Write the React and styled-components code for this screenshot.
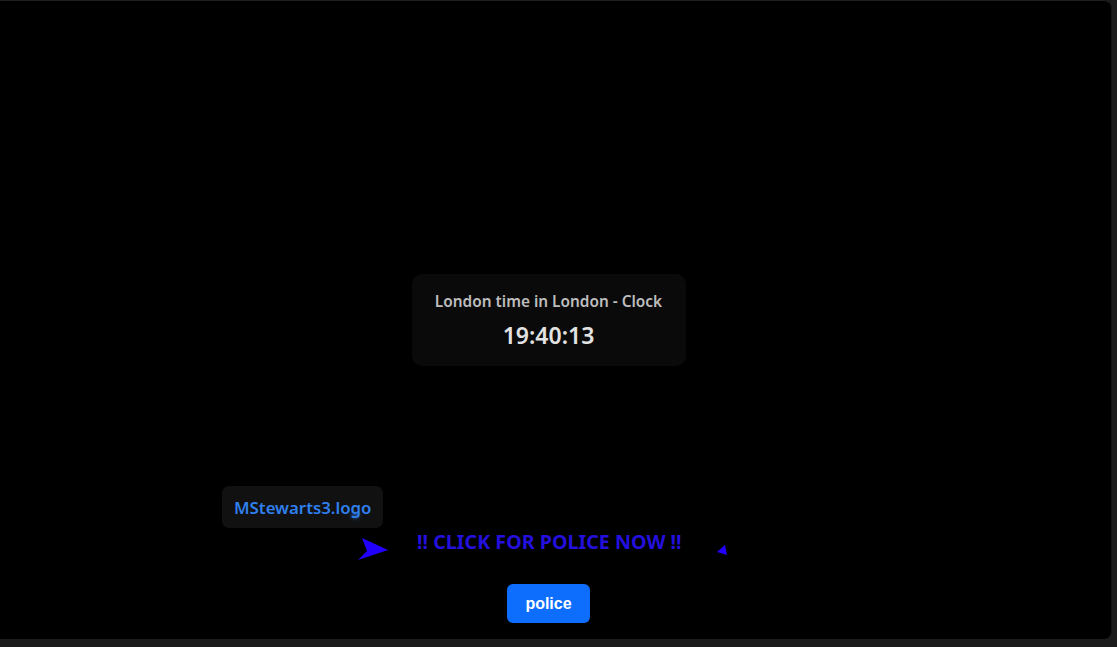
import React from "react";
import styled, { createGlobalStyle } from "styled-components";

const GlobalStyle = createGlobalStyle`
  html, body {
    margin: 0;
    padding: 0;
    background: #1b1b1b;
  }
  body {
    font-family: "Noto Sans", "Open Sans", sans-serif;
    font-variant-ligatures: none;
  }
`;

export default function App() {
  return (
    <>
      <GlobalStyle />
      <Panel>
        <ClockCard>
          <ClockTitle>London time in London - Clock</ClockTitle>
          <ClockTime>19:40:13</ClockTime>
        </ClockCard>

        <LogoRow>
          <LogoCard>
            MStewarts3.logo
            <Glow />
          </LogoCard>
        </LogoRow>

        <CallRow>
          <Dart width="31" height="23" viewBox="0 0 31 23">
            <polygon points="4,0 30,12 0,22 9,13" />
          </Dart>
          <CallText>!! CLICK FOR POLICE NOW !!</CallText>
          <SmallTip width="11" height="11" viewBox="0 0 11 11">
            <polygon points="8,0 0,7 10,10" />
          </SmallTip>
        </CallRow>

        <PoliceButton>police</PoliceButton>
      </Panel>
    </>
  );
}

const Panel = styled.div`
  display: flex;
  flex-direction: column;
  align-items: center;
  box-sizing: border-box;
  width: 1112px;
  height: 639px;
  padding: 273px 14px 0 0;
  background: #000;
  border-top: 1px solid #1e1e1e;
  border-right: 1px solid #111;
  border-radius: 0 8px 8px 0;
`;

const ClockCard = styled.div`
  display: flex;
  flex-direction: column;
  align-items: center;
  box-sizing: border-box;
  width: 274px;
  height: 92px;
  padding-top: 17px;
  gap: 8px;
  background: #0a0a0a;
  border-radius: 10px;
`;

const ClockTitle = styled.div`
  color: #bdbdbd;
  font-size: 15.4px;
  font-weight: 600;
  line-height: 21px;
`;

const ClockTime = styled.div`
  color: #e2e2e2;
  font-size: 23px;
  font-weight: 600;
  line-height: 30px;
`;

const LogoRow = styled.div`
  align-self: stretch;
  display: flex;
  padding-left: 222px;
  margin-top: 120px;
`;

const LogoCard = styled.div`
  position: relative;
  display: flex;
  align-items: center;
  box-sizing: border-box;
  height: 42px;
  padding: 0 12px;
  background: #111;
  border-radius: 7px;
  color: #2f7fee;
  font-size: 16.8px;
  font-weight: 600;
`;

const Glow = styled.span`
  position: absolute;
  left: 129px;
  top: 27px;
  width: 8px;
  height: 5px;
  border-radius: 50%;
  background: #2f7fee;
  filter: blur(2px);
  opacity: 0.7;
`;

const CallRow = styled.div`
  align-self: flex-start;
  display: flex;
  align-items: flex-start;
  margin: 10px 0 0 358px;
`;

const Dart = styled.svg`
  fill: #2200ff;
`;

const CallText = styled.div`
  margin: -9px 0 0 28px;
  color: #2410dc;
  font-size: 19.7px;
  font-weight: 700;
  line-height: 26px;
  white-space: nowrap;
`;

const SmallTip = styled.svg`
  fill: #2200ff;
  margin: 7px 0 0 35px;
`;

const PoliceButton = styled.button`
  margin-top: 23px;
  width: 83px;
  height: 39px;
  border: none;
  border-radius: 6px;
  background: #0d6efd;
  color: #fff;
  font-family: "Liberation Sans", Arial, sans-serif;
  font-size: 16px;
  font-weight: 700;
  cursor: pointer;
`;
